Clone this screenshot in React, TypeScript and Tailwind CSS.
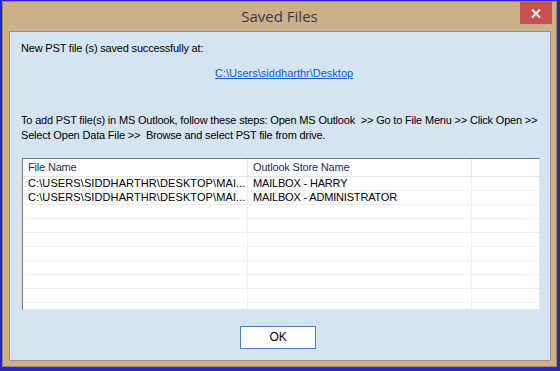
import React from 'react';

const ROWS = [
  { file: 'C:\\USERS\\SIDDHARTHR\\DESKTOP\\MAI...', store: 'MAILBOX - HARRY' },
  { file: 'C:\\USERS\\SIDDHARTHR\\DESKTOP\\MAI...', store: 'MAILBOX - ADMINISTRATOR' },
];

const EMPTY_ROWS = 8;

export default function App() {
  return (
    <div className="w-[560px] h-[371px] bg-[#2c20d4] pl-[2px] pr-[3px] pt-[1px] pb-[4px]">
      {/* window */}
      <div className="relative flex flex-col h-full bg-[#cbb089] border border-[#9d8864]">
        {/* title bar */}
        <div className="h-[29px] flex items-center justify-center shrink-0">
          <span
            className="text-[15px] text-[#3a3a3a] pb-[1px]"
            style={{ fontFamily: '"Open Sans", "Noto Sans", sans-serif' }}
          >
            Saved Files
          </span>
        </div>
        <button className="absolute top-0 left-[517px] w-[32px] h-[22px] bg-[#c75050] flex items-center justify-center">
          <svg width="10" height="9" viewBox="0 0 10 9">
            <path d="M1 0.5 L9 8.5 M9 0.5 L1 8.5" stroke="#fff" strokeWidth="2" />
          </svg>
        </button>

        {/* content */}
        <div
          className="flex-1 ml-[6px] mr-[5px] mb-[5px] bg-[#d5e4f3] border border-[#a38f6d] text-[11px] text-black leading-[13px] tracking-[-0.18px]"
          style={{ fontFamily: '"Liberation Sans", Arial, sans-serif' }}
        >
          <p className="mt-[10px] ml-[11px]">New PST file (s) saved successfully at:</p>

          <p className="mt-[12px] ml-[205px]">
            <a className="text-[#0a5fd8] underline tracking-[0px]" href="#">
              C:\Users\siddharthr\Desktop
            </a>
          </p>

          <p className="mt-[33px] ml-[11px] leading-[15px] whitespace-nowrap">
            To add PST file(s) in MS Outlook, follow these steps: Open MS Outlook &nbsp;&gt;&gt; Go to File Menu &gt;&gt; Click Open &gt;&gt;
            <br />
            Select Open Data File &gt;&gt; &nbsp;Browse and select PST file from drive.
          </p>

          {/* list view */}
          <div className="mt-[15px] ml-[12px] w-[518px] h-[152px] bg-white border border-t-[#7a7a7a] border-l-[#7a7a7a] border-r-[#e3e3e3] border-b-[#e3e3e3] overflow-hidden">
            <div className="flex h-[18px] border-b border-[#e5e5e5] text-[#1e2f52]">
              <div className="w-[225px] px-[5px] flex items-center border-r border-[#e5e5e5]">File Name</div>
              <div className="w-[224px] px-[5px] flex items-center border-r border-[#e5e5e5]">Outlook Store Name</div>
              <div className="flex-1" />
            </div>
            {ROWS.map((row, i) => (
              <div key={i} className="flex h-[14px] border-b border-[#eeeeee]">
                <div className="w-[225px] px-[5px] flex items-center border-r border-[#eeeeee] whitespace-nowrap overflow-hidden tracking-[0.1px]">
                  {row.file}
                </div>
                <div className="w-[224px] px-[5px] flex items-center border-r border-[#eeeeee] whitespace-nowrap">
                  {row.store}
                </div>
                <div className="flex-1" />
              </div>
            ))}
            {Array.from({ length: EMPTY_ROWS }).map((_, i) => (
              <div key={i} className="flex h-[14px] border-b border-[#eeeeee]">
                <div className="w-[225px] border-r border-[#eeeeee]" />
                <div className="w-[224px] border-r border-[#eeeeee]" />
                <div className="flex-1" />
              </div>
            ))}
          </div>

          <div className="mt-[16px] flex">
            <button className="ml-[230px] w-[76px] h-[23px] bg-white border border-[#3f86cc] text-[12px] text-black">
              OK
            </button>
          </div>
        </div>
      </div>
    </div>
  );
}
